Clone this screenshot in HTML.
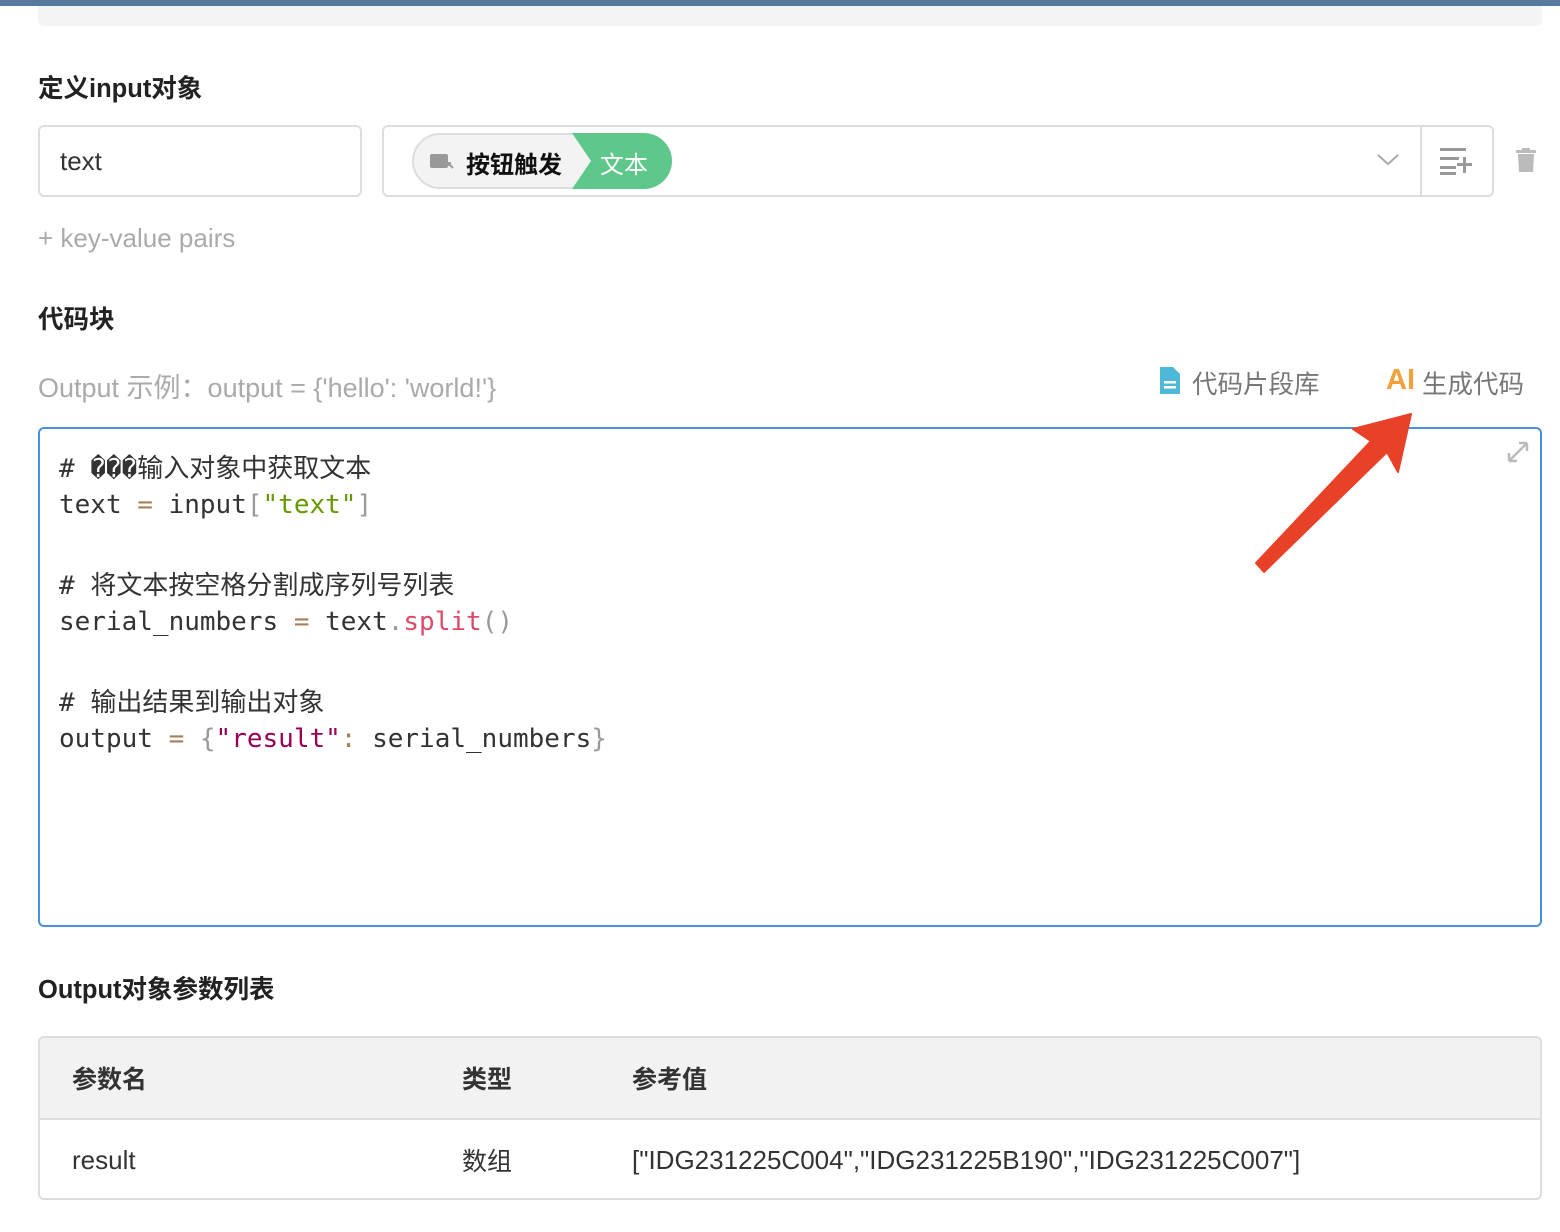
<!DOCTYPE html>
<html><head><meta charset="utf-8"><style>
*{margin:0;padding:0;box-sizing:border-box}
body{width:1560px;height:1232px;background:#fff;position:relative;overflow:hidden;font-family:"Liberation Sans","Noto Sans CJK SC",sans-serif;color:#333}
.a{position:absolute;white-space:nowrap}
.h{font-size:25.5px;font-weight:bold;color:#222}
.code{font-family:"DejaVu Sans Mono","Noto Sans CJK SC",monospace;font-size:26px;color:#333;line-height:39px}
.code div{height:39px}
.c{font-family:"Noto Sans CJK SC",sans-serif}
</style></head><body>
<div class="a" style="left:0;top:0;width:1560px;height:6px;background:#557a9c"></div>
<div class="a" style="left:38px;top:6px;width:1504px;height:20px;background:#f4f4f4;border-radius:0 0 6px 6px"></div>

<div class="a h" style="left:38px;top:68px">定义input对象</div>
<div class="a" style="left:38px;top:125px;width:324px;height:72px;border:2px solid #ddd;border-radius:6px"></div>
<div class="a" style="left:60px;top:146px;font-size:26px;color:#333">text</div>

<div class="a" style="left:382px;top:125px;width:1112px;height:72px;border:2px solid #ddd;border-radius:6px"></div>
<div class="a" style="left:1420px;top:125px;width:2px;height:72px;background:#ddd"></div>
<div class="a" style="left:412px;top:133px;width:200px;height:56px;border:2px solid #ddd;border-radius:28px;background:#f3f3f3"></div>
<svg class="a" style="left:412px;top:133px" width="262" height="56">
<path d="M160 0 H232 A28 28 0 0 1 232 56 H160 L179 28 Z" fill="#5ec88a"/>
<rect x="18" y="21" width="18" height="14" rx="2" fill="#999"/>
<path d="M36 30 L41 35 M36 30 h3 M36 30 v3" stroke="#999" stroke-width="2"/>
</svg>
<div class="a c" style="left:466px;top:145px;font-size:24px;font-weight:bold;color:#111">按钮触发</div>
<div class="a c" style="left:600px;top:145px;font-size:24px;color:#fff">文本</div>
<svg class="a" style="left:1376px;top:152px" width="24" height="16"><path d="M2 3 L12 12 L22 3" stroke="#aaa" stroke-width="2" fill="none"/></svg>
<svg class="a" style="left:1440px;top:146px" width="34" height="30">
<rect x="0" y="2" width="26" height="3" fill="#999"/><rect x="0" y="11" width="19" height="3" fill="#999"/><rect x="0" y="20" width="16" height="3" fill="#999"/><rect x="0" y="26" width="16" height="3" fill="#999"/>
<rect x="17" y="17" width="15" height="3" fill="#999"/><rect x="23" y="11" width="3" height="16" fill="#999"/></svg>
<svg class="a" style="left:1516px;top:148px" width="20" height="26"><rect x="0" y="2" width="20" height="3" rx="1" fill="#bbb"/><rect x="6" y="0" width="8" height="3" fill="#bbb"/><path d="M2 6 H18 L17 24 H3 Z" fill="#bbb"/></svg>

<div class="a" style="left:38px;top:223px;font-size:26px;color:#aaa">+ key-value pairs</div>

<div class="a h" style="left:38px;top:299px">代码块</div>
<div class="a" style="left:38px;top:366px;font-size:27px;color:#aaa">Output 示例：output = {'hello': 'world!'}</div>
<svg class="a" style="left:1158px;top:367px" width="24" height="29"><path d="M2 0 H15 L22 7 V27 H2 Z" fill="#4db8d8" rx="2"/><rect x="6" y="14" width="12" height="2.5" fill="#fff"/><rect x="6" y="19" width="12" height="2.5" fill="#fff"/></svg>
<div class="a c" style="left:1192px;top:364px;font-size:25.5px;color:#777">代码片段库</div>
<div class="a" style="left:1386px;top:364px;font-size:29px;font-weight:bold;color:#f2a03a">AI</div>
<div class="a c" style="left:1422px;top:364px;font-size:25.5px;color:#777">生成代码</div>

<div class="a" style="left:38px;top:427px;width:1504px;height:500px;border:2px solid #4a90e2;border-radius:6px"></div>
<svg class="a" style="left:1506px;top:440px" width="24" height="24"><path d="M3 21 L21 3 M3 21 v-8 M3 21 h8 M21 3 h-8 M21 3 v8" stroke="#bbb" stroke-width="2.5" fill="none"/></svg>

<div class="a code" style="left:59px;top:447px">
<div># <span style="font-family:'DejaVu Sans Mono',monospace">���</span><span class="c">输入对象中获取文本</span></div>
<div>text <span style="color:#a67f59">=</span> input<span style="color:#999">[</span><span style="color:#669900">"text"</span><span style="color:#999">]</span></div>
<div>&nbsp;</div>
<div># <span class="c">将文本按空格分割成序列号列表</span></div>
<div>serial_numbers <span style="color:#a67f59">=</span> text<span style="color:#999">.</span><span style="color:#dd4a68">split</span><span style="color:#999">()</span></div>
<div>&nbsp;</div>
<div># <span class="c">输出结果到输出对象</span></div>
<div>output <span style="color:#a67f59">=</span> <span style="color:#999">{</span><span style="color:#990055">"result"</span><span style="color:#a67f59">:</span> serial_numbers<span style="color:#999">}</span></div>
</div>

<svg class="a" style="left:0;top:0" width="1560" height="1232"><polygon points="1411,414 1353,429 1371,441 1256,563 1264,572 1387,452 1398,472" fill="#e84128" stroke="#e84128" stroke-width="2" stroke-linejoin="round"/></svg>

<div class="a h" style="left:38px;top:969px">Output对象参数列表</div>
<div class="a" style="left:38px;top:1036px;width:1504px;height:164px;border:2px solid #ddd;border-radius:6px;overflow:hidden">
<div style="height:82px;background:#f2f2f2;border-bottom:2px solid #ddd"></div></div>
<div class="a c" style="left:72px;top:1060px;font-size:25px;font-weight:bold;color:#333">参数名</div>
<div class="a c" style="left:462px;top:1060px;font-size:25px;font-weight:bold;color:#333">类型</div>
<div class="a c" style="left:632px;top:1060px;font-size:25px;font-weight:bold;color:#333">参考值</div>
<div class="a" style="left:72px;top:1145px;font-size:26px;color:#333">result</div>
<div class="a c" style="left:462px;top:1142px;font-size:25px;color:#333">数组</div>
<div class="a" style="left:632px;top:1145px;font-size:26px;color:#333">["IDG231225C004","IDG231225B190","IDG231225C007"]</div>
</body></html>
